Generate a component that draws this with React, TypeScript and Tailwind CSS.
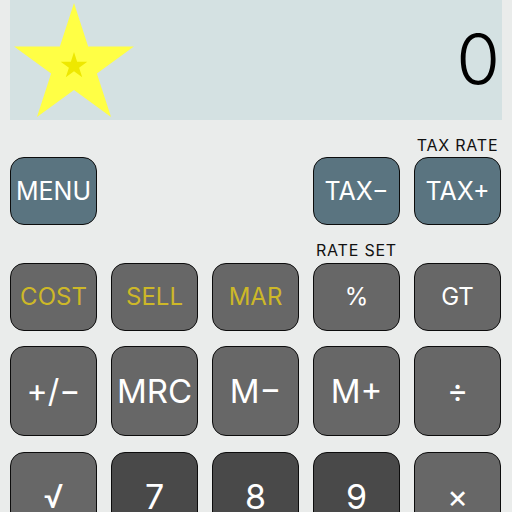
import React from "react";

function starPoints(cx: number, cy: number, r: number) {
  const pts: string[] = [];
  for (let i = 0; i < 10; i++) {
    const a = ((-90 + 36 * i) * Math.PI) / 180;
    const rr = i % 2 === 0 ? r : r * 0.382;
    pts.push(`${(cx + rr * Math.cos(a)).toFixed(2)},${(cy + rr * Math.sin(a)).toFixed(2)}`);
  }
  return pts.join(" ");
}

type Key = { label: string; kind: "teal" | "gray" | "dark"; yellow?: boolean; size?: string };

function CalcKey({ k, tall }: { k: Key; tall?: boolean }) {
  const bg = k.kind === "teal" ? "bg-[#5a7480]" : k.kind === "dark" ? "bg-[#494949]" : "bg-[#676767]";
  return (
    <button
      className={`${bg} ${tall ? "h-[90px]" : "h-[68px]"} w-[87px] rounded-[14px] border-[1.5px] border-[#0c0c0c] flex items-center justify-center ${
        k.yellow ? "text-[#cdb828]" : "text-white"
      } ${k.size ?? "text-[25px]"} leading-none`}
    >
      {k.label}
    </button>
  );
}

const row2: Key[] = [
  { label: "COST", kind: "gray", yellow: true, size: "text-[24px]" },
  { label: "SELL", kind: "gray", yellow: true, size: "text-[24px]" },
  { label: "MAR", kind: "gray", yellow: true, size: "text-[24px]" },
  { label: "%", kind: "gray", size: "text-[24px]" },
  { label: "GT", kind: "gray", size: "text-[24px]" },
];
const row3: Key[] = [
  { label: "+/−", kind: "gray", size: "text-[32px]" },
  { label: "MRC", kind: "gray", size: "text-[33px]" },
  { label: "M−", kind: "gray", size: "text-[33px]" },
  { label: "M+", kind: "gray", size: "text-[33px]" },
  { label: "÷", kind: "gray", size: "text-[32px]" },
];
const row4: Key[] = [
  { label: "√", kind: "gray", size: "text-[32px]" },
  { label: "7", kind: "dark", size: "text-[34px]" },
  { label: "8", kind: "dark", size: "text-[34px]" },
  { label: "9", kind: "dark", size: "text-[34px]" },
  { label: "×", kind: "gray", size: "text-[32px]" },
];

export default function App() {
  return (
    <div
      className="w-[512px] h-[512px] overflow-hidden bg-[#eaeceb]"
      style={{ fontFamily: "Inter, 'Liberation Sans', sans-serif" }}
    >
      <div className="ml-[10px] w-[492px] h-[120px] bg-[#d4e1e2] flex items-center justify-between">
        <svg width="140" height="120" viewBox="0 0 140 120" className="-ml-[10px]">
          <polygon points={starPoints(74, 66, 63)} fill="#ffff45" />
          <polygon points={starPoints(74, 66, 14)} fill="#eee800" />
        </svg>
        <span className="text-[71px] font-light text-black leading-none pr-[2px] -mt-[2px]">0</span>
      </div>

      <div className="pl-[10px] grid grid-cols-[repeat(5,87px)] gap-x-[14px]">
        <div className="col-start-5 h-[37px] flex items-end justify-center pb-[4px] text-[16px] tracking-[0.8px] text-[#111] leading-none">
          TAX RATE
        </div>
        <div className="col-start-1">
          <CalcKey k={{ label: "MENU", kind: "teal" }} />
        </div>
        <div className="col-start-4">
          <CalcKey k={{ label: "TAX−", kind: "teal" }} />
        </div>
        <div className="col-start-5">
          <CalcKey k={{ label: "TAX+", kind: "teal" }} />
        </div>

        <div className="col-start-4 h-[38px] flex items-end justify-center pb-[5px] text-[16px] tracking-[0.8px] text-[#111] leading-none">
          RATE SET
        </div>
        {row2.map((k, i) => (
          <div key={k.label} className={i === 0 ? "col-start-1" : ""}>
            <CalcKey k={k} />
          </div>
        ))}
      </div>

      <div className="pl-[10px] mt-[15px] flex flex-col gap-[16px]">
        <div className="flex gap-[14px]">
          {row3.map((k) => (
            <CalcKey key={k.label} k={k} tall />
          ))}
        </div>
        <div className="flex gap-[14px]">
          {row4.map((k) => (
            <CalcKey key={k.label} k={k} tall />
          ))}
        </div>
      </div>
    </div>
  );
}
